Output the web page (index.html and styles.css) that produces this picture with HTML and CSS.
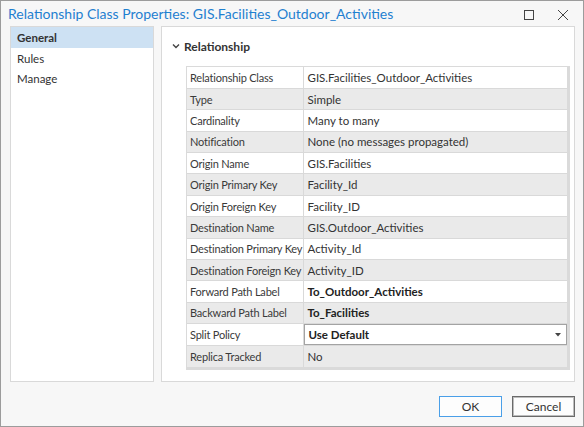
FILE: index.html
```html
<!DOCTYPE html>
<html lang="en">
<head>
<meta charset="utf-8">
<title>Relationship Class Properties</title>
<link rel="stylesheet" href="styles.css">
</head>
<body>
<div class="window">
  <header class="titlebar">
    <span class="title">Relationship Class Properties: GIS.Facilities_Outdoor_Activities</span>
    <div class="winbtns">
      <svg class="winicon" width="12" height="12" viewBox="0 0 12 12"><rect x="1.5" y="1.5" width="9" height="9" fill="none" stroke="#444" stroke-width="1"/></svg>
      <svg class="winicon" width="12" height="12" viewBox="0 0 12 12"><path d="M1 1 L11 11 M11 1 L1 11" stroke="#444" stroke-width="1" fill="none"/></svg>
    </div>
  </header>
  <main class="content">
    <nav class="sidebar">
      <div class="nav-item active">General</div>
      <div class="nav-item">Rules</div>
      <div class="nav-item">Manage</div>
    </nav>
    <section class="panel">
      <div class="section-head">
        <svg class="chevron" width="8" height="6" viewBox="0 0 8 6"><path d="M1 1.5 L4 4.5 L7 1.5" fill="none" stroke="#444" stroke-width="1.4"/></svg>
        <span>Relationship</span>
      </div>
      <div class="grid-wrap">
        <table class="props">
          <colgroup><col class="kcol"><col></colgroup>
          <tr><td class="k">Relationship Class</td><td class="v">GIS.Facilities_Outdoor_Activities</td></tr>
          <tr><td class="k">Type</td><td class="v">Simple</td></tr>
          <tr><td class="k">Cardinality</td><td class="v">Many to many</td></tr>
          <tr><td class="k">Notification</td><td class="v">None (no messages propagated)</td></tr>
          <tr><td class="k">Origin Name</td><td class="v">GIS.Facilities</td></tr>
          <tr><td class="k">Origin Primary Key</td><td class="v">Facility_Id</td></tr>
          <tr><td class="k">Origin Foreign Key</td><td class="v">Facility_ID</td></tr>
          <tr><td class="k">Destination Name</td><td class="v">GIS.Outdoor_Activities</td></tr>
          <tr><td class="k">Destination Primary Key</td><td class="v">Activity_Id</td></tr>
          <tr><td class="k">Destination Foreign Key</td><td class="v">Activity_ID</td></tr>
          <tr><td class="k">Forward Path Label</td><td class="v strong">To_Outdoor_Activities</td></tr>
          <tr><td class="k">Backward Path Label</td><td class="v strong">To_Facilities</td></tr>
          <tr><td class="k">Split Policy</td><td class="v combo-cell"><div class="combo"><span>Use Default</span><svg width="6" height="4" viewBox="0 0 6 4"><path d="M0 0 H6 L3 3.5 Z" fill="#444"/></svg></div></td></tr>
          <tr><td class="k">Replica Tracked</td><td class="v">No</td></tr>
        </table>
      </div>
    </section>
  </main>
  <footer class="buttons">
    <button class="btn default">OK</button>
    <button class="btn focus">Cancel</button>
  </footer>
</div>
</body>
</html>
```
FILE: styles.css
```css
* { box-sizing: border-box; }
html, body { margin: 0; padding: 0; }
body {
  font-family: "Lato", "Open Sans", sans-serif;
  color: #333;
  background: #f7f7f7;
}
.window {
  width: 584px;
  height: 427px;
  border: 1px solid #9c9c9c;
  background: #f7f7f7;
  display: flex;
  flex-direction: column;
}
.titlebar {
  height: 25px;
  display: flex;
  align-items: center;
  justify-content: space-between;
  padding: 0 14px 0 7px;
}
.title {
  font-size: 14px;
  color: #1f80d0;
}
.winbtns {
  display: flex;
  gap: 22px;
  align-items: center;
  padding-top: 2px;
}
.winicon { display: block; }
.content {
  height: 356px;
  display: flex;
  gap: 7px;
  padding: 0 8px 0 9px;
}
.sidebar {
  width: 144px;
  border: 1px solid #d9d9d9;
  background: #fff;
}
.nav-item {
  height: 20.5px;
  line-height: 21px;
  padding-left: 6px;
  font-size: 11.5px;
  color: #333;
}
.nav-item.active {
  background: #cde1f3;
  font-weight: 700;
}
.panel {
  flex: 1;
  border: 1px solid #d9d9d9;
  background: #fff;
  padding: 10px 4px 0 10px;
}
.section-head {
  display: flex;
  align-items: center;
  gap: 4px;
  height: 18px;
  font-size: 12px;
  font-weight: 700;
  color: #333;
}
.chevron { display: block; }
.grid-wrap {
  margin: 11px 0 0 14px;
  border: 1px solid #dadada;
  border-right-width: 3px;
  border-bottom-width: 3px;
}
.props {
  width: 100%;
  table-layout: fixed;
  border-collapse: collapse;
  font-size: 11.5px;
}
.kcol { width: 116px; }
.props tr:nth-child(odd) { background: #fff; }
.props tr:nth-child(even) { background: #eaeaea; }
.props td {
  height: 21.4px;
  padding: 0 4px;
  border: 1px solid #d9d9d9;
  white-space: nowrap;
  overflow: hidden;
}
.props tr:first-of-type td { border-top: 0; }
.props td:first-child { border-left: 0; }
.props td:last-child { border-right: 0; }
.props tr:last-child td { border-bottom: 0; }
.props .k { color: #3a3a3a; font-size: 11px; letter-spacing: -0.2px; padding-left: 3px; }
.props .v { color: #333; }
.props .strong { font-weight: 700; color: #222; }
.props .combo-cell { padding: 0; }
.combo {
  height: 21px;
  border: 1px solid #a3a3a3;
  background: #fff;
  display: flex;
  align-items: center;
  justify-content: space-between;
  padding: 0 5px 0 4px;
  font-weight: 700;
  color: #222;
}
.combo svg { display: block; }
.buttons {
  flex: 1;
  display: flex;
  justify-content: flex-end;
  align-items: flex-start;
  gap: 10px;
  padding: 14px 8px 0 0;
}
.btn {
  width: 63px;
  height: 21px;
  font-family: inherit;
  font-size: 12px;
  color: #333;
  background: #fdfdfd;
  border: 1px solid #707070;
  padding: 0;
}
.btn.default { border-color: #4a9fe8; }
.btn.focus { box-shadow: inset 0 0 0 1px #bdbdbd; border-color: #6a6a6a; }
```
